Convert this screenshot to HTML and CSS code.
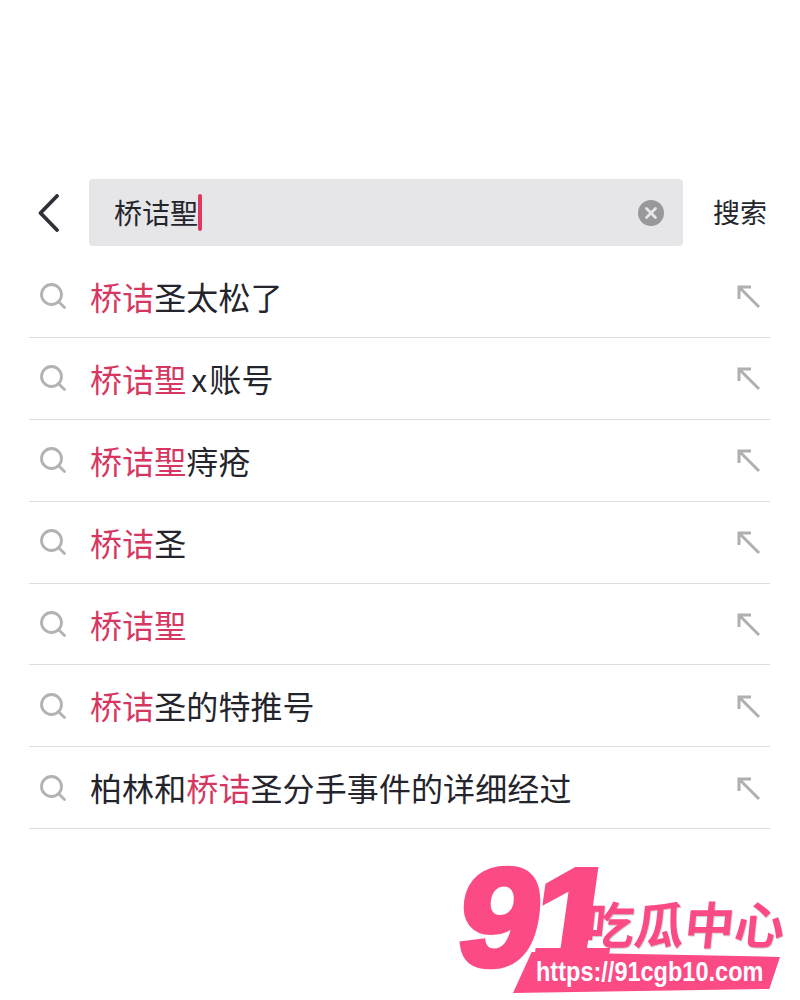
FILE: index.html
```html
<!DOCTYPE html>
<html lang="zh-CN">
<head>
    <meta charset="UTF-8">
    <title>搜索</title>
    <link rel="stylesheet" href="styles.css">
</head>
<body>
    <div class="page">
        <header class="search-bar">
            <svg class="back" width="24" height="38" viewBox="0 0 24 38"><path d="M20 2 L3.500 19 L20 36" fill="none" stroke="#2f3138" stroke-width="3.800" stroke-linecap="round" stroke-linejoin="round"/></svg>
            <div class="search-box">
                <span class="query">桥诘聖</span><span class="caret"></span>
                <svg class="clear" width="26" height="26" viewBox="0 0 26 26"><circle cx="13" cy="13" r="13" fill="#98989c"/><path d="M8.500 8.500 L17.500 17.500 M17.500 8.500 L8.500 17.500" stroke="#e6e6e8" stroke-width="2.800" stroke-linecap="round"/></svg>
            </div>
            <span class="search-btn">搜索</span>
        </header>

        <ul class="list">
            <li class="row">
                <svg class="glass" width="26" height="26" viewBox="0 0 26 26"><circle cx="11.500" cy="11.500" r="10" fill="none" stroke="#b2b2b2" stroke-width="2.800"/><path d="M18.700 18.700 L24.500 24.500" stroke="#b2b2b2" stroke-width="2.800" stroke-linecap="round"/></svg>
                <span class="label"><em>桥诘</em>圣太松了</span>
                <svg class="fill" width="24" height="24" viewBox="0 0 24 24"><path d="M2 14 V2 H14 M2 2 L22 22" fill="none" stroke="#b0b0b0" stroke-width="3"/></svg>
            </li>
            <li class="row">
                <svg class="glass" width="26" height="26" viewBox="0 0 26 26"><circle cx="11.500" cy="11.500" r="10" fill="none" stroke="#b2b2b2" stroke-width="2.800"/><path d="M18.700 18.700 L24.500 24.500" stroke="#b2b2b2" stroke-width="2.800" stroke-linecap="round"/></svg>
                <span class="label"><em>桥诘聖</em><span class="latin">x</span>账号</span>
                <svg class="fill" width="24" height="24" viewBox="0 0 24 24"><path d="M2 14 V2 H14 M2 2 L22 22" fill="none" stroke="#b0b0b0" stroke-width="3"/></svg>
            </li>
            <li class="row">
                <svg class="glass" width="26" height="26" viewBox="0 0 26 26"><circle cx="11.500" cy="11.500" r="10" fill="none" stroke="#b2b2b2" stroke-width="2.800"/><path d="M18.700 18.700 L24.500 24.500" stroke="#b2b2b2" stroke-width="2.800" stroke-linecap="round"/></svg>
                <span class="label"><em>桥诘聖</em>痔疮</span>
                <svg class="fill" width="24" height="24" viewBox="0 0 24 24"><path d="M2 14 V2 H14 M2 2 L22 22" fill="none" stroke="#b0b0b0" stroke-width="3"/></svg>
            </li>
            <li class="row">
                <svg class="glass" width="26" height="26" viewBox="0 0 26 26"><circle cx="11.500" cy="11.500" r="10" fill="none" stroke="#b2b2b2" stroke-width="2.800"/><path d="M18.700 18.700 L24.500 24.500" stroke="#b2b2b2" stroke-width="2.800" stroke-linecap="round"/></svg>
                <span class="label"><em>桥诘</em>圣</span>
                <svg class="fill" width="24" height="24" viewBox="0 0 24 24"><path d="M2 14 V2 H14 M2 2 L22 22" fill="none" stroke="#b0b0b0" stroke-width="3"/></svg>
            </li>
            <li class="row">
                <svg class="glass" width="26" height="26" viewBox="0 0 26 26"><circle cx="11.500" cy="11.500" r="10" fill="none" stroke="#b2b2b2" stroke-width="2.800"/><path d="M18.700 18.700 L24.500 24.500" stroke="#b2b2b2" stroke-width="2.800" stroke-linecap="round"/></svg>
                <span class="label"><em>桥诘聖</em></span>
                <svg class="fill" width="24" height="24" viewBox="0 0 24 24"><path d="M2 14 V2 H14 M2 2 L22 22" fill="none" stroke="#b0b0b0" stroke-width="3"/></svg>
            </li>
            <li class="row">
                <svg class="glass" width="26" height="26" viewBox="0 0 26 26"><circle cx="11.500" cy="11.500" r="10" fill="none" stroke="#b2b2b2" stroke-width="2.800"/><path d="M18.700 18.700 L24.500 24.500" stroke="#b2b2b2" stroke-width="2.800" stroke-linecap="round"/></svg>
                <span class="label"><em>桥诘</em>圣的特推号</span>
                <svg class="fill" width="24" height="24" viewBox="0 0 24 24"><path d="M2 14 V2 H14 M2 2 L22 22" fill="none" stroke="#b0b0b0" stroke-width="3"/></svg>
            </li>
            <li class="row">
                <svg class="glass" width="26" height="26" viewBox="0 0 26 26"><circle cx="11.500" cy="11.500" r="10" fill="none" stroke="#b2b2b2" stroke-width="2.800"/><path d="M18.700 18.700 L24.500 24.500" stroke="#b2b2b2" stroke-width="2.800" stroke-linecap="round"/></svg>
                <span class="label">柏林和<em>桥诘</em>圣分手事件的详细经过</span>
                <svg class="fill" width="24" height="24" viewBox="0 0 24 24"><path d="M2 14 V2 H14 M2 2 L22 22" fill="none" stroke="#b0b0b0" stroke-width="3"/></svg>
            </li>
        </ul>

        <!-- watermark sits over the page corner -->
        <div class="logo">
            <span class="logo-num">91</span>
            <span class="logo-name">吃瓜中心</span>
            <div class="logo-banner"></div>
            <span class="logo-url">https://91cgb10.com</span>
        </div>
    </div>
</body>
</html>
```

FILE: styles.css
```css
* {
    box-sizing: border-box;
}
html, body {
    margin: 0;
    padding: 0;
    background: #fff;
}
.page {
    position: relative;
    width: 800px;
    height: 1000px;
    overflow: hidden;
    padding-top: 179px;
    font-family: "Noto Sans CJK SC", "Noto Sans", sans-serif;
    color: #24252c;
}
.search-bar {
    display: flex;
    align-items: center;
    height: 67px;
    padding-left: 37px;
}
.back {
    flex: none;
    margin-right: 28px;
}
.search-box {
    display: flex;
    align-items: center;
    width: 594px;
    height: 67px;
    padding: 0 19px 0 25px;
    background: #e6e6e8;
    border-radius: 4px;
}
.query {
    font-size: 28px;
    line-height: 40px;
    margin-top: -2px;
}
.caret {
    width: 4px;
    height: 37px;
    margin-bottom: 1px;
    background: #e0395f;
    border-radius: 2px;
}
.clear {
    margin-left: auto;
}
.search-btn {
    margin-left: 30px;
    margin-top: -2px;
    font-size: 27px;
    line-height: 40px;
    white-space: nowrap;
}
.list {
    list-style: none;
    margin: 10px 30px 0 29px;
    padding: 0;
}
.row {
    display: flex;
    align-items: center;
    height: 81.900px;
    padding: 0 9px 1px 11px;
    border-bottom: 1.500px solid #dedede;
}
.glass {
    flex: none;
    margin-right: 24px;
    margin-top: 1px;
}
.label {
    flex: 1;
    font-size: 32px;
    line-height: 44px;
    letter-spacing: 0.1px;
    white-space: nowrap;
}
.label em {
    font-style: normal;
    color: #d6365f;
}
.latin {
    margin: 0 2px 0 5px;
}
.fill {
    flex: none;
    margin-top: 3px;
}
.logo {
    position: absolute;
    left: 455px;
    top: 860px;
    width: 340px;
    height: 140px;
    color: #fb4a84;
}
.logo-num {
    position: absolute;
    left: 5px;
    top: -18px;
    font-family: "Liberation Sans", sans-serif;
    font-size: 138px;
    font-weight: 700;
    line-height: 150px;
    letter-spacing: -7px;
    -webkit-text-stroke: 6px #fb4a84;
    transform: skewX(-8deg) scaleX(1.06);
    transform-origin: left center;
    text-shadow: 1px 2px 2px rgba(0, 0, 0, 0.25);
}
.logo-name {
    position: absolute;
    left: 130px;
    top: 32px;
    font-size: 50px;
    font-weight: 700;
    line-height: 60px;
    white-space: nowrap;
    transform: skewX(-6deg);
    text-shadow: 1px 1px 1px rgba(0, 0, 0, 0.2);
}
.logo-banner {
    position: absolute;
    left: 58px;
    top: 92px;
    width: 267px;
    height: 41px;
    background: #fb4a84;
    clip-path: polygon(7% 0, 100% 12%, 96% 90%, 0 100%);
}
.logo-url {
    position: absolute;
    left: 81px;
    top: 94px;
    font-family: "Liberation Sans", sans-serif;
    font-size: 28px;
    font-weight: 700;
    line-height: 36px;
    color: #fff;
    white-space: nowrap;
    transform: scaleX(0.84);
    transform-origin: left center;
}
```
